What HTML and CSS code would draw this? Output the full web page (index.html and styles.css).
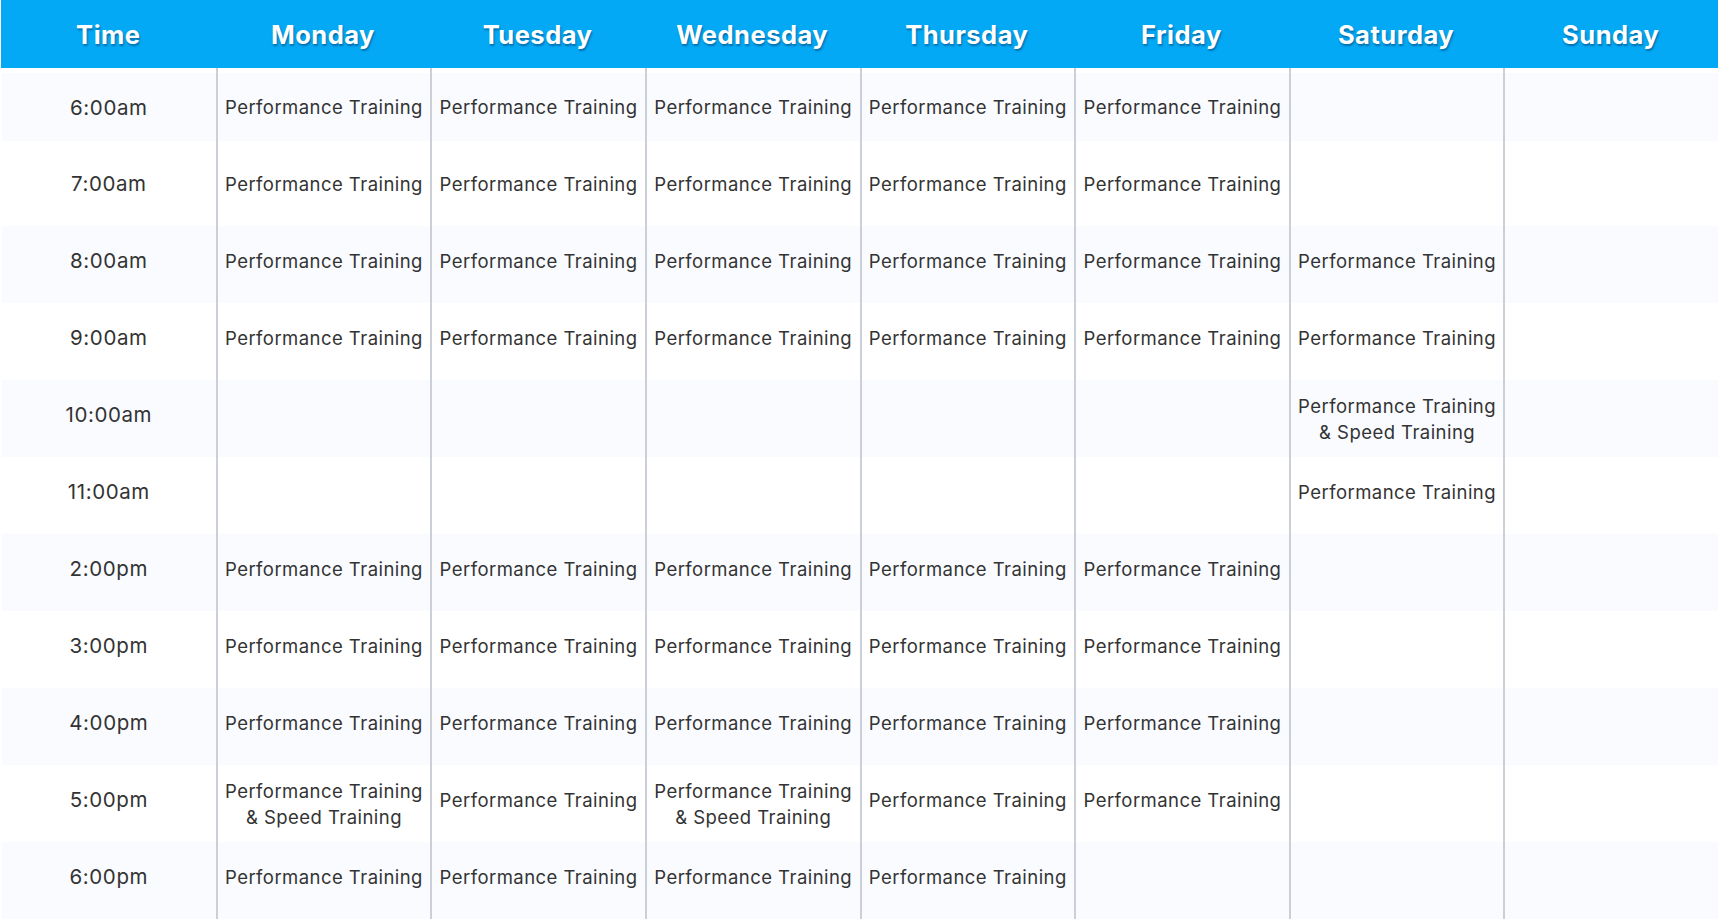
FILE: index.html
```html
<!DOCTYPE html>
<html lang="en">
<head>
<meta charset="utf-8">
<title>Schedule</title>
<link rel="stylesheet" href="styles.css">
</head>
<body>
<div class="schedule">
  <div class="head">
    <div class="hcell">Time</div>
    <div class="hcell">Monday</div>
    <div class="hcell">Tuesday</div>
    <div class="hcell">Wednesday</div>
    <div class="hcell">Thursday</div>
    <div class="hcell">Friday</div>
    <div class="hcell">Saturday</div>
    <div class="hcell">Sunday</div>
  </div>
  <div class="body">
    <div class="row stripe first">
      <div class="time">6:00am</div>
      <div class="cell">Performance Training</div>
      <div class="cell">Performance Training</div>
      <div class="cell">Performance Training</div>
      <div class="cell">Performance Training</div>
      <div class="cell">Performance Training</div>
      <div class="cell"></div>
      <div class="cell"></div>
    </div>
    <div class="row">
      <div class="time">7:00am</div>
      <div class="cell">Performance Training</div>
      <div class="cell">Performance Training</div>
      <div class="cell">Performance Training</div>
      <div class="cell">Performance Training</div>
      <div class="cell">Performance Training</div>
      <div class="cell"></div>
      <div class="cell"></div>
    </div>
    <div class="row stripe">
      <div class="time">8:00am</div>
      <div class="cell">Performance Training</div>
      <div class="cell">Performance Training</div>
      <div class="cell">Performance Training</div>
      <div class="cell">Performance Training</div>
      <div class="cell">Performance Training</div>
      <div class="cell">Performance Training</div>
      <div class="cell"></div>
    </div>
    <div class="row">
      <div class="time">9:00am</div>
      <div class="cell">Performance Training</div>
      <div class="cell">Performance Training</div>
      <div class="cell">Performance Training</div>
      <div class="cell">Performance Training</div>
      <div class="cell">Performance Training</div>
      <div class="cell">Performance Training</div>
      <div class="cell"></div>
    </div>
    <div class="row stripe">
      <div class="time">10:00am</div>
      <div class="cell"></div>
      <div class="cell"></div>
      <div class="cell"></div>
      <div class="cell"></div>
      <div class="cell"></div>
      <div class="cell two">Performance Training<br>&amp; Speed Training</div>
      <div class="cell"></div>
    </div>
    <div class="row">
      <div class="time">11:00am</div>
      <div class="cell"></div>
      <div class="cell"></div>
      <div class="cell"></div>
      <div class="cell"></div>
      <div class="cell"></div>
      <div class="cell">Performance Training</div>
      <div class="cell"></div>
    </div>
    <div class="row stripe">
      <div class="time">2:00pm</div>
      <div class="cell">Performance Training</div>
      <div class="cell">Performance Training</div>
      <div class="cell">Performance Training</div>
      <div class="cell">Performance Training</div>
      <div class="cell">Performance Training</div>
      <div class="cell"></div>
      <div class="cell"></div>
    </div>
    <div class="row">
      <div class="time">3:00pm</div>
      <div class="cell">Performance Training</div>
      <div class="cell">Performance Training</div>
      <div class="cell">Performance Training</div>
      <div class="cell">Performance Training</div>
      <div class="cell">Performance Training</div>
      <div class="cell"></div>
      <div class="cell"></div>
    </div>
    <div class="row stripe">
      <div class="time">4:00pm</div>
      <div class="cell">Performance Training</div>
      <div class="cell">Performance Training</div>
      <div class="cell">Performance Training</div>
      <div class="cell">Performance Training</div>
      <div class="cell">Performance Training</div>
      <div class="cell"></div>
      <div class="cell"></div>
    </div>
    <div class="row">
      <div class="time">5:00pm</div>
      <div class="cell two">Performance Training<br>&amp; Speed Training</div>
      <div class="cell">Performance Training</div>
      <div class="cell two">Performance Training<br>&amp; Speed Training</div>
      <div class="cell">Performance Training</div>
      <div class="cell">Performance Training</div>
      <div class="cell"></div>
      <div class="cell"></div>
    </div>
    <div class="row stripe">
      <div class="time">6:00pm</div>
      <div class="cell">Performance Training</div>
      <div class="cell">Performance Training</div>
      <div class="cell">Performance Training</div>
      <div class="cell">Performance Training</div>
      <div class="cell"></div>
      <div class="cell"></div>
      <div class="cell"></div>
    </div>
  </div>
</div>
</body>
</html>
```

FILE: styles.css
```css
html, body {
  margin: 0;
  padding: 0;
  background: #ffffff;
}

body {
  font-family: Inter, "Open Sans", "Liberation Sans", sans-serif;
  color: #333333;
}

.schedule {
  margin: 0 2px 0 1px;
}

.head {
  display: grid;
  grid-template-columns: repeat(8, 1fr);
  height: 68px;
  background: #03a9f4;
}

.hcell {
  display: flex;
  align-items: center;
  justify-content: center;
  color: #ffffff;
  font-weight: 700;
  font-size: 25.5px;
  letter-spacing: 0.5px;
  text-shadow: 1px 2px 2px rgba(0, 40, 90, 0.45);
}

.row {
  display: grid;
  grid-template-columns: repeat(8, 1fr);
  height: 77px;
}

.row.first {
  height: 81px;
}

.row.first > div {
  padding-top: 5px;
  background-clip: content-box;
}

.row.stripe > div {
  background-color: #f9fbff;
}

.time,
.cell {
  display: flex;
  align-items: center;
  justify-content: center;
  text-align: center;
  box-sizing: border-box;
  padding-bottom: 8px;
}

.time {
  font-size: 20.5px;
  letter-spacing: 0.6px;
  margin-left: 1px;
}

.cell {
  border-left: 2px solid #cbd0d8;
  font-size: 18.5px;
  letter-spacing: 0.45px;
  line-height: 26px;
}

.cell.two {
  padding-bottom: 0;
}
```
